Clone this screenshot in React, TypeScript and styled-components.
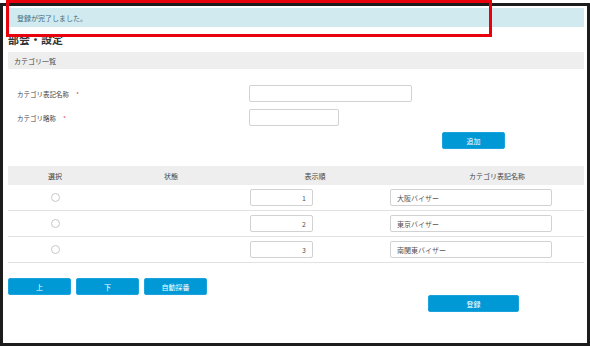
import React from "react";
import styled, { createGlobalStyle } from "styled-components";

const GlobalStyle = createGlobalStyle`
  body {
    margin: 0;
    background: #ffffff;
    font-family: "Noto Sans CJK JP", "Noto Sans", sans-serif;
    color: #333333;
  }
`;

const Frame = styled.div`
  position: relative;
  box-sizing: border-box;
  width: 590px;
  height: 343px;
  margin-top: 3px;
  border: 3px solid #1c1c1c;
  padding: 2px 3px 0 5px;
  background: #ffffff;
`;

const Alert = styled.div`
  height: 19px;
  display: flex;
  align-items: center;
  padding-left: 9px;
  background: #d0eaf0;
  color: #3d6d80;
  font-size: 7px;
`;

const Title = styled.h1`
  margin: 3px 0 0;
  height: 20px;
  font-size: 11px;
  line-height: 18px;
  font-weight: 700;
  color: #333333;
`;

const SectionHeader = styled.div`
  height: 17px;
  margin-top: 2px;
  display: flex;
  align-items: center;
  padding-left: 6px;
  background: #eeeeee;
  font-size: 7px;
  color: #444444;
`;

const FormArea = styled.div`
  display: flex;
  flex-direction: column;
  gap: 7px;
  padding-top: 16px;
`;

const FormRow = styled.div`
  display: flex;
  align-items: center;
`;

const Label = styled.label`
  width: 232px;
  padding-left: 9px;
  font-size: 6.5px;
  color: #444444;
`;

const Required = styled.span`
  color: #e05050;
  margin-left: 7px;
`;

const TextInput = styled.input<{ $w: number; $align?: string }>`
  box-sizing: border-box;
  width: ${(p) => p.$w}px;
  height: 17px;
  margin: 0;
  padding: 0 6px;
  border: 1px solid #d2d2d2;
  border-radius: 2px;
  font-family: inherit;
  font-size: 7px;
  color: #555555;
  text-align: ${(p) => p.$align || "left"};
  outline: none;
`;

const Button = styled.button<{ $w: number }>`
  box-sizing: border-box;
  width: ${(p) => p.$w}px;
  height: 17px;
  margin: 0;
  padding: 0;
  border: 1px solid #1aa3dc;
  border-radius: 2px;
  background: #0099d6;
  color: #ffffff;
  font-family: inherit;
  font-size: 7px;
  cursor: pointer;
`;

const AddRow = styled.div`
  display: flex;
  padding: 6px 0 0 434px;
`;

const Table = styled.div`
  margin-top: 17px;
`;

const Row = styled.div<{ $head?: boolean }>`
  display: grid;
  grid-template-columns: 94px 138px 150px 194px;
  align-items: center;
  height: ${(p) => (p.$head ? 19 : 25)}px;
  background: ${(p) => (p.$head ? "#eeeeee" : "transparent")};
  border-bottom: ${(p) => (p.$head ? "none" : "1px solid #e2e2e2")};
  font-size: 7px;
  color: #444444;
`;

const HeadCell = styled.div<{ $shift?: number }>`
  text-align: center;
  padding-left: ${(p) => p.$shift || 0}px;
`;

const Cell = styled.div<{ $pad?: number; $center?: boolean }>`
  display: flex;
  justify-content: ${(p) => (p.$center ? "center" : "flex-start")};
  padding-left: ${(p) => p.$pad || 0}px;
`;

const Radio = styled.span`
  box-sizing: border-box;
  width: 9px;
  height: 9px;
  border: 1.5px solid #c8c8c8;
  border-radius: 50%;
  background: #ffffff;
`;

const Toolbar = styled.div`
  display: flex;
  gap: 5px;
  padding-top: 15px;
`;

const SubmitRow = styled.div`
  display: flex;
  padding-left: 420px;
`;

const Highlight = styled.div`
  position: absolute;
  left: 3px;
  top: -6px;
  width: 486px;
  height: 37px;
  box-sizing: border-box;
  border: 3px solid #e8000b;
  pointer-events: none;
`;

const categories = [
  { order: 1, name: "大阪バイザー" },
  { order: 2, name: "東京バイザー" },
  { order: 3, name: "南関東バイザー" },
];

export default function App() {
  return (
    <>
      <GlobalStyle />
      <Frame>
        <Alert>登録が完了しました。</Alert>
        <Title>部会・設定</Title>
        <SectionHeader>カテゴリ一覧</SectionHeader>

        <FormArea>
          <FormRow>
            <Label>
              カテゴリ表記名称<Required>*</Required>
            </Label>
            <TextInput $w={163} />
          </FormRow>
          <FormRow>
            <Label>
              カテゴリ略称<Required>*</Required>
            </Label>
            <TextInput $w={90} />
          </FormRow>
        </FormArea>
        <AddRow>
          <Button $w={63}>追加</Button>
        </AddRow>

        <Table>
          <Row $head>
            <HeadCell>選択</HeadCell>
            <HeadCell>状態</HeadCell>
            <HeadCell>表示順</HeadCell>
            <HeadCell $shift={20}>カテゴリ表記名称</HeadCell>
          </Row>
          {categories.map((c) => (
            <Row key={c.order}>
              <Cell $center>
                <Radio />
              </Cell>
              <Cell />
              <Cell $pad={10}>
                <TextInput $w={63} $align="right" defaultValue={c.order} />
              </Cell>
              <Cell>
                <TextInput $w={162} defaultValue={c.name} />
              </Cell>
            </Row>
          ))}
        </Table>

        <Toolbar>
          <Button $w={63}>上</Button>
          <Button $w={63}>下</Button>
          <Button $w={63}>自動採番</Button>
        </Toolbar>
        <SubmitRow>
          <Button $w={91}>登録</Button>
        </SubmitRow>

        <Highlight />
      </Frame>
    </>
  );
}
